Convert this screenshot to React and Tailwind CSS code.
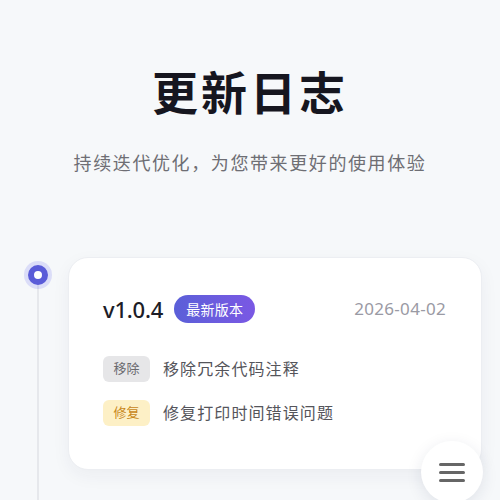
import React from "react";

const font = { fontFamily: '"Noto Sans", "Noto Sans CJK SC", sans-serif' };

export default function App() {
  return (
    <div
      className="relative w-[500px] h-[500px] overflow-hidden bg-[#f6f8fa]"
      style={font}
    >
      <header className="pt-[68px] text-center">
        <h1 className="text-[46px] leading-[48px] font-bold tracking-[3px] text-[#16161f]">
          更新日志
        </h1>
        <p className="mt-[35px] text-[18px] leading-[24px] tracking-[1.6px] text-[#6e6e74]">
          持续迭代优化，为您带来更好的使用体验
        </p>
      </header>

      <section className="relative mt-[82px] pl-[68px] pr-[18px]">
        <div className="absolute left-[37px] top-[20px] bottom-[-200px] w-[2px] bg-[#e6e8ec]" />
        <div className="absolute left-[28px] top-[8px] w-[20px] h-[20px] rounded-full border-[6px] border-[#5a5cd8] bg-white shadow-[0_0_0_4px_rgba(99,102,241,0.18)]" />

        <div className="rounded-[20px] bg-white border border-[#eceef2] shadow-[0_6px_18px_rgba(30,40,80,0.05)] pl-[34px] pr-[35px] pt-[37px] pb-[43px]">
          <div className="flex items-center h-[28px]">
            <span className="text-[22px] font-medium text-[#1d1d27] tracking-[-0.2px]">
              v1.0.4
            </span>
            <span className="ml-[11px] h-[28px] px-[12px] flex items-center rounded-full bg-gradient-to-r from-[#5a5fd8] to-[#7a58e4] text-white text-[14px] tracking-[0.3px]">
              最新版本
            </span>
            <span className="ml-auto text-[17px] text-[#9a9aa4] tracking-[0.3px]">2026-04-02</span>
          </div>

          <div className="mt-[33px] flex flex-col gap-[18px]">
            <div className="flex items-center">
              <span className="w-[47px] h-[26px] flex items-center justify-center rounded-[6px] bg-[#e6e6e8] text-[#6a6a6f] text-[13px]">
                移除
              </span>
              <span className="ml-[13px] text-[16px] text-[#55555b] tracking-[1.1px]">
                移除冗余代码注释
              </span>
            </div>
            <div className="flex items-center">
              <span className="w-[47px] h-[26px] flex items-center justify-center rounded-[6px] bg-[#fdf0c6] text-[#c8871a] text-[13px]">
                修复
              </span>
              <span className="ml-[13px] text-[16px] text-[#55555b] tracking-[1.1px]">
                修复打印时间错误问题
              </span>
            </div>
          </div>
        </div>
      </section>

      <button className="absolute left-[421px] top-[441px] w-[62px] h-[62px] rounded-full bg-white shadow-[0_4px_16px_rgba(30,40,80,0.1)] flex flex-col items-center justify-center gap-[5px]">
        <span className="block w-[26px] h-[3px] rounded-full bg-[#666]" />
        <span className="block w-[26px] h-[3px] rounded-full bg-[#666]" />
        <span className="block w-[26px] h-[3px] rounded-full bg-[#666]" />
      </button>
    </div>
  );
}
